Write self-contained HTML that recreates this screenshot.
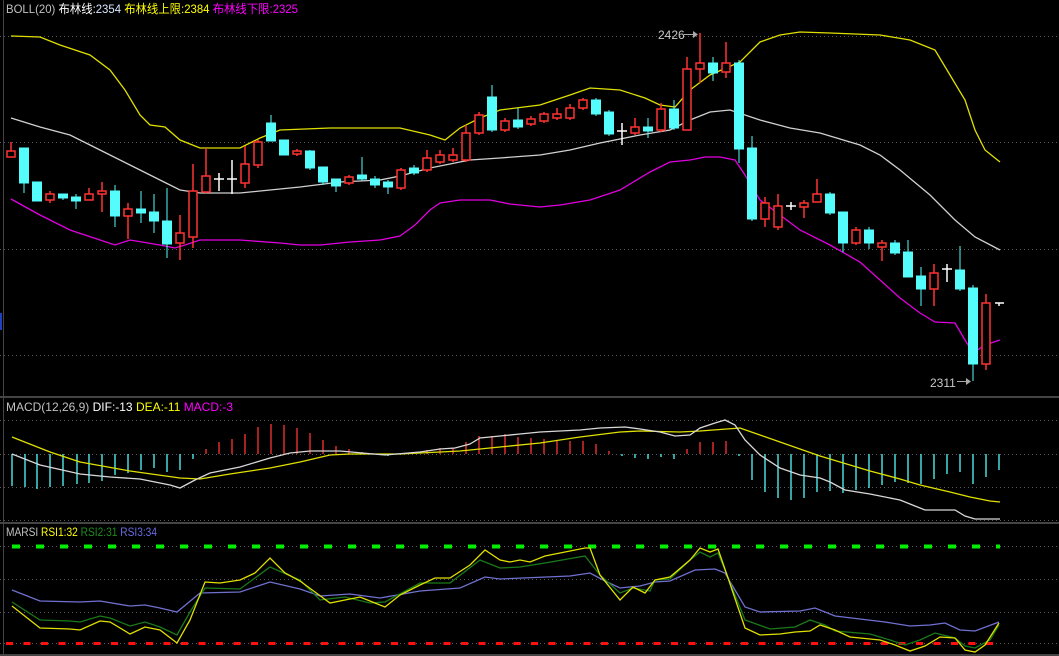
<!DOCTYPE html>
<html><head><meta charset="utf-8"><style>
html,body{margin:0;padding:0;background:#000;width:1059px;height:656px;overflow:hidden}
svg{display:block}
text{font-family:"Liberation Sans","Noto Sans CJK SC",sans-serif;font-size:12px}
</style></head><body>
<svg width="1059" height="656" viewBox="0 0 1059 656" xmlns="http://www.w3.org/2000/svg">
<rect width="1059" height="656" fill="#000"/>
<g stroke="#5a5a5a" stroke-width="1" stroke-dasharray="1,3">
<line x1="0" y1="36.5" x2="1059" y2="36.5"/><line x1="0" y1="142.5" x2="1059" y2="142.5"/><line x1="0" y1="249.5" x2="1059" y2="249.5"/><line x1="0" y1="355.5" x2="1059" y2="355.5"/>
<line x1="0" y1="420.5" x2="1059" y2="420.5"/><line x1="0" y1="454.5" x2="1059" y2="454.5"/><line x1="0" y1="487.5" x2="1059" y2="487.5"/><line x1="0" y1="520.5" x2="1059" y2="520.5"/>
<line x1="0" y1="546.5" x2="1059" y2="546.5"/><line x1="0" y1="579.5" x2="1059" y2="579.5"/><line x1="0" y1="612.5" x2="1059" y2="612.5"/><line x1="0" y1="643.5" x2="1059" y2="643.5"/>
</g>
<g stroke="#444" stroke-width="2"><line x1="0" y1="397" x2="1059" y2="397"/><line x1="0" y1="523" x2="1059" y2="523"/><line x1="0" y1="655" x2="1059" y2="655"/></g>
<line x1="3.5" y1="0" x2="3.5" y2="656" stroke="#444"/>
<rect x="0" y="313" width="2" height="17" fill="#2040c0"/>

<text x="6" y="13" textLength="292" lengthAdjust="spacingAndGlyphs"><tspan fill="#c0c0c0">BOLL(20) </tspan><tspan fill="#fff">布林线:</tspan><tspan fill="#d8e8ff">2354 </tspan><tspan fill="#ffff00">布林线上限:2384 </tspan><tspan fill="#ff00ff">布林线下限:2325</tspan></text>

<polyline fill="none" stroke="#e0e000" stroke-width="1.3" points="11,36 40,37 60,45 90,55 110,70 125,90 140,115 150,125 165,127 180,140 200,148 240,148 260,138 280,130 330,128 400,128 430,135 445,140 460,128 480,118 500,110 540,105 570,95 590,88 620,90 645,98 660,105 675,107 690,90 710,75 740,62 760,42 780,35 800,32 830,33 880,35 910,40 935,50 950,75 965,100 975,130 985,150 1000,162"/>
<polyline fill="none" stroke="#d0d0d0" stroke-width="1.3" points="11,118 40,127 70,135 100,150 130,165 160,180 180,190 200,193 240,193 270,190 300,187 340,182 380,180 400,176 430,168 470,160 500,158 540,155 570,150 600,143 640,135 670,130 690,120 710,112 730,110 760,120 790,128 820,133 860,145 880,155 900,170 930,195 955,220 975,237 1000,250"/>
<polyline fill="none" stroke="#e000e0" stroke-width="1.3" points="11,199 40,215 70,230 100,240 115,245 130,240 160,245 175,248 185,245 200,240 240,240 280,243 300,245 320,245 350,242 380,240 400,236 415,225 430,210 440,203 460,200 490,200 510,204 540,207 560,205 590,200 620,190 650,172 670,162 690,160 705,157 720,157 735,160 745,175 760,200 780,215 800,230 830,245 860,262 880,280 900,298 920,313 935,322 955,323 965,340 973,353 985,345 1000,340"/>

<g stroke-width="1">
<g stroke="#ff3333" fill="#000" stroke-width="1.5">
<line x1="11" y1="142" x2="11" y2="157"/><rect x="7" y="151" width="8" height="6"/>
<line x1="50" y1="191" x2="50" y2="203"/><rect x="46" y="194" width="8" height="6"/>
<line x1="89" y1="188" x2="89" y2="200"/><rect x="85" y="194" width="8" height="6"/>
<line x1="102" y1="182" x2="102" y2="212"/><rect x="98" y="191" width="8" height="3"/>
<line x1="128" y1="203" x2="128" y2="239"/><rect x="124" y="209" width="8" height="7"/>
<line x1="180" y1="215" x2="180" y2="260"/><rect x="176" y="233" width="8" height="10"/>
<line x1="193" y1="164" x2="193" y2="248"/><rect x="189" y="191" width="8" height="46"/>
<line x1="206" y1="148" x2="206" y2="193"/><rect x="202" y="176" width="8" height="16"/>
<line x1="245" y1="146" x2="245" y2="188"/><rect x="241" y="164" width="8" height="19"/>
<line x1="258" y1="140" x2="258" y2="168"/><rect x="254" y="142" width="8" height="23"/>
<line x1="297" y1="149" x2="297" y2="156"/><rect x="293" y="151" width="8" height="3"/>
<line x1="349" y1="175" x2="349" y2="185"/><rect x="345" y="177" width="8" height="6"/>
<line x1="401" y1="168" x2="401" y2="190"/><rect x="397" y="170" width="8" height="18"/>
<line x1="427" y1="150" x2="427" y2="172"/><rect x="423" y="158" width="8" height="12"/>
<line x1="440" y1="150" x2="440" y2="164"/><rect x="436" y="155" width="8" height="7"/>
<line x1="453" y1="148" x2="453" y2="162"/><rect x="449" y="155" width="8" height="5"/>
<line x1="466" y1="125" x2="466" y2="162"/><rect x="462" y="133" width="8" height="27"/>
<line x1="479" y1="112" x2="479" y2="135"/><rect x="475" y="115" width="8" height="18"/>
<line x1="505" y1="118" x2="505" y2="132"/><rect x="501" y="121" width="8" height="9"/>
<line x1="531" y1="116" x2="531" y2="126"/><rect x="527" y="119" width="8" height="5"/>
<line x1="544" y1="112" x2="544" y2="123"/><rect x="540" y="114" width="8" height="7"/>
<line x1="557" y1="108" x2="557" y2="120"/><rect x="553" y="114" width="8" height="4"/>
<line x1="570" y1="104" x2="570" y2="120"/><rect x="566" y="108" width="8" height="10"/>
<line x1="583" y1="98" x2="583" y2="110"/><rect x="579" y="100" width="8" height="8"/>
<line x1="635" y1="118" x2="635" y2="135"/><rect x="631" y="127" width="8" height="6"/>
<line x1="661" y1="103" x2="661" y2="132"/><rect x="657" y="109" width="8" height="21"/>
<line x1="687" y1="57" x2="687" y2="130"/><rect x="683" y="69" width="8" height="61"/>
<line x1="700" y1="33" x2="700" y2="83"/><rect x="696" y="63" width="8" height="6"/>
<line x1="726" y1="42" x2="726" y2="78"/><rect x="722" y="63" width="8" height="9"/>
<line x1="765" y1="197" x2="765" y2="227"/><rect x="761" y="203" width="8" height="16"/>
<line x1="778" y1="194" x2="778" y2="230"/><rect x="774" y="206" width="8" height="21"/>
<line x1="804" y1="200" x2="804" y2="218"/><rect x="800" y="203" width="8" height="4"/>
<line x1="817" y1="179" x2="817" y2="202"/><rect x="813" y="194" width="8" height="8"/>
<line x1="856" y1="227" x2="856" y2="245"/><rect x="852" y="230" width="8" height="13"/>
<line x1="882" y1="240" x2="882" y2="261"/><rect x="878" y="243" width="8" height="4"/>
<line x1="934" y1="264" x2="934" y2="306"/><rect x="930" y="273" width="8" height="16"/>
<line x1="986" y1="294" x2="986" y2="370"/><rect x="982" y="303" width="8" height="61"/>
</g>
<g stroke="#54fcfc" fill="#54fcfc">
<line x1="24" y1="148" x2="24" y2="193"/><rect x="19.5" y="148" width="9" height="35"/>
<line x1="37" y1="182" x2="37" y2="201"/><rect x="32.5" y="182" width="9" height="19"/>
<line x1="63" y1="194" x2="63" y2="200"/><rect x="58.5" y="194" width="9" height="4"/>
<line x1="76" y1="194" x2="76" y2="209"/><rect x="71.5" y="197" width="9" height="4"/>
<line x1="115" y1="185" x2="115" y2="227"/><rect x="110.5" y="191" width="9" height="25"/>
<line x1="141" y1="191" x2="141" y2="223"/><rect x="136.5" y="209" width="9" height="4"/>
<line x1="154" y1="194" x2="154" y2="233"/><rect x="149.5" y="212" width="9" height="9"/>
<line x1="167" y1="188" x2="167" y2="258"/><rect x="162.5" y="221" width="9" height="23"/>
<line x1="271" y1="115" x2="271" y2="141"/><rect x="266.5" y="123" width="9" height="18"/>
<line x1="284" y1="140" x2="284" y2="155"/><rect x="279.5" y="140" width="9" height="15"/>
<line x1="310" y1="150" x2="310" y2="170"/><rect x="305.5" y="151" width="9" height="17"/>
<line x1="323" y1="167" x2="323" y2="185"/><rect x="318.5" y="167" width="9" height="15"/>
<line x1="336" y1="179" x2="336" y2="192"/><rect x="331.5" y="179" width="9" height="7"/>
<line x1="362" y1="157" x2="362" y2="181"/><rect x="357.5" y="175" width="9" height="4"/>
<line x1="375" y1="176" x2="375" y2="188"/><rect x="370.5" y="179" width="9" height="6"/>
<line x1="388" y1="180" x2="388" y2="194"/><rect x="383.5" y="182" width="9" height="5"/>
<line x1="414" y1="165" x2="414" y2="175"/><rect x="409.5" y="168" width="9" height="5"/>
<line x1="492" y1="85" x2="492" y2="132"/><rect x="487.5" y="97" width="9" height="33"/>
<line x1="518" y1="108" x2="518" y2="129"/><rect x="513.5" y="120" width="9" height="7"/>
<line x1="596" y1="98" x2="596" y2="116"/><rect x="591.5" y="100" width="9" height="14"/>
<line x1="609" y1="110" x2="609" y2="136"/><rect x="604.5" y="112" width="9" height="22"/>
<line x1="648" y1="118" x2="648" y2="138"/><rect x="643.5" y="127" width="9" height="4"/>
<line x1="674" y1="100" x2="674" y2="130"/><rect x="669.5" y="109" width="9" height="19"/>
<line x1="713" y1="57" x2="713" y2="81"/><rect x="708.5" y="63" width="9" height="10"/>
<line x1="739" y1="60" x2="739" y2="163"/><rect x="734.5" y="63" width="9" height="86"/>
<line x1="752" y1="136" x2="752" y2="221"/><rect x="747.5" y="148" width="9" height="71"/>
<line x1="830" y1="192" x2="830" y2="215"/><rect x="825.5" y="194" width="9" height="19"/>
<line x1="843" y1="212" x2="843" y2="252"/><rect x="838.5" y="212" width="9" height="31"/>
<line x1="869" y1="227" x2="869" y2="249"/><rect x="864.5" y="230" width="9" height="13"/>
<line x1="895" y1="240" x2="895" y2="255"/><rect x="890.5" y="243" width="9" height="10"/>
<line x1="908" y1="240" x2="908" y2="277"/><rect x="903.5" y="252" width="9" height="25"/>
<line x1="921" y1="267" x2="921" y2="306"/><rect x="916.5" y="276" width="9" height="13"/>
<line x1="960" y1="246" x2="960" y2="291"/><rect x="955.5" y="270" width="9" height="19"/>
<line x1="973" y1="285" x2="973" y2="381"/><rect x="968.5" y="288" width="9" height="76"/>
</g>
<g stroke="#fff" stroke-width="1.5">
<line x1="219" y1="173" x2="219" y2="191"/><line x1="214" y1="179" x2="224" y2="179"/>
<line x1="232" y1="160" x2="232" y2="194"/><line x1="227" y1="179" x2="237" y2="179"/>
<line x1="622" y1="123" x2="622" y2="145"/><line x1="617" y1="131" x2="627" y2="131"/>
<line x1="791" y1="202" x2="791" y2="210"/><line x1="786" y1="206" x2="796" y2="206"/>
<line x1="947" y1="264" x2="947" y2="282"/><line x1="942" y1="269" x2="952" y2="269"/>
<line x1="999" y1="303" x2="999" y2="306"/><line x1="995" y1="303" x2="1004" y2="303"/>
</g>
</g>
<text x="658" y="39" fill="#c8c8c8">2426</text>
<line x1="684" y1="34.5" x2="696" y2="34.5" stroke="#aaa"/><path d="M693,31 L698,34.5 L693,38z" fill="#aaa"/>
<text x="930" y="387" fill="#c8c8c8">2311</text>
<line x1="957" y1="381.5" x2="969" y2="381.5" stroke="#aaa"/><path d="M966,378 L971,381.5 L966,385z" fill="#aaa"/>

<text x="6" y="411" textLength="227" lengthAdjust="spacingAndGlyphs"><tspan fill="#c0c0c0">MACD(12,26,9) </tspan><tspan fill="#fff">DIF:-13 </tspan><tspan fill="#ffff00">DEA:-11 </tspan><tspan fill="#ff00ff">MACD:-3</tspan></text>
<g stroke="#54fcfc" stroke-width="1.3">
<line x1="12" y1="454" x2="12" y2="486"/><line x1="25" y1="454" x2="25" y2="487"/><line x1="37" y1="454" x2="37" y2="489"/><line x1="50" y1="454" x2="50" y2="487"/><line x1="63" y1="454" x2="63" y2="486"/><line x1="77" y1="454" x2="77" y2="484"/><line x1="89" y1="454" x2="89" y2="483"/><line x1="102" y1="454" x2="102" y2="481"/><line x1="115" y1="454" x2="115" y2="475"/><line x1="128" y1="454" x2="128" y2="473"/><line x1="141" y1="454" x2="141" y2="470"/><line x1="154" y1="454" x2="154" y2="468"/><line x1="167" y1="454" x2="167" y2="472"/><line x1="180" y1="454" x2="180" y2="470"/><line x1="193" y1="454" x2="193" y2="459"/>
<line x1="388" y1="454" x2="388" y2="456"/><line x1="622" y1="454" x2="622" y2="456"/><line x1="635" y1="454" x2="635" y2="458"/><line x1="648" y1="454" x2="648" y2="459"/><line x1="661" y1="454" x2="661" y2="457"/><line x1="674" y1="454" x2="674" y2="459"/>
<line x1="739" y1="454" x2="739" y2="456"/><line x1="752" y1="454" x2="752" y2="480"/><line x1="765" y1="454" x2="765" y2="492"/><line x1="778" y1="454" x2="778" y2="498"/><line x1="791" y1="454" x2="791" y2="500"/><line x1="804" y1="454" x2="804" y2="498"/><line x1="817" y1="454" x2="817" y2="492"/><line x1="830" y1="454" x2="830" y2="491"/><line x1="843" y1="454" x2="843" y2="493"/><line x1="856" y1="454" x2="856" y2="490"/><line x1="869" y1="454" x2="869" y2="488"/><line x1="882" y1="454" x2="882" y2="485"/><line x1="895" y1="454" x2="895" y2="482"/><line x1="908" y1="454" x2="908" y2="483"/><line x1="921" y1="454" x2="921" y2="484"/><line x1="934" y1="454" x2="934" y2="479"/><line x1="947" y1="454" x2="947" y2="474"/><line x1="960" y1="454" x2="960" y2="472"/><line x1="973" y1="454" x2="973" y2="484"/><line x1="986" y1="454" x2="986" y2="477"/><line x1="999" y1="454" x2="999" y2="470"/>
</g>
<g stroke="#ff3333" stroke-width="1.3">
<line x1="206" y1="454" x2="206" y2="449"/><line x1="219" y1="454" x2="219" y2="442"/><line x1="232" y1="454" x2="232" y2="439"/><line x1="245" y1="454" x2="245" y2="434"/><line x1="258" y1="454" x2="258" y2="427"/><line x1="271" y1="454" x2="271" y2="424"/><line x1="284" y1="454" x2="284" y2="425"/><line x1="297" y1="454" x2="297" y2="428"/><line x1="310" y1="454" x2="310" y2="433"/><line x1="323" y1="454" x2="323" y2="440"/><line x1="336" y1="454" x2="336" y2="446"/><line x1="349" y1="454" x2="349" y2="449"/><line x1="362" y1="454" x2="362" y2="452"/>
<line x1="427" y1="454" x2="427" y2="450"/><line x1="440" y1="454" x2="440" y2="448"/><line x1="453" y1="454" x2="453" y2="448"/><line x1="466" y1="454" x2="466" y2="442"/><line x1="479" y1="454" x2="479" y2="436"/><line x1="492" y1="454" x2="492" y2="436"/><line x1="505" y1="454" x2="505" y2="434"/><line x1="518" y1="454" x2="518" y2="437"/><line x1="531" y1="454" x2="531" y2="438"/><line x1="544" y1="454" x2="544" y2="439"/><line x1="557" y1="454" x2="557" y2="441"/><line x1="570" y1="454" x2="570" y2="441"/><line x1="583" y1="454" x2="583" y2="441"/><line x1="596" y1="454" x2="596" y2="444"/><line x1="609" y1="454" x2="609" y2="451"/>
<line x1="687" y1="454" x2="687" y2="449"/><line x1="700" y1="454" x2="700" y2="442"/><line x1="713" y1="454" x2="713" y2="442"/><line x1="726" y1="454" x2="726" y2="441"/>
</g>
<polyline fill="none" stroke="#e0e000" stroke-width="1.3" points="12,437 50,452 80,462 130,471 180,478 200,479 230,474 270,468 300,462 330,455 350,454 400,454 460,451 500,447 540,443 580,437 620,432 640,431 680,432 700,431 740,428 760,435 780,442 800,449 820,456 850,465 870,471 900,479 920,485 950,492 970,497 990,501 1000,502"/>
<polyline fill="none" stroke="#d8d8d8" stroke-width="1.3" points="12,454 40,465 80,474 110,477 140,479 170,485 180,488 195,480 210,473 240,467 270,458 290,453 310,451 340,451 385,455 420,452 440,449 455,448 470,444 480,438 500,436 520,434 540,432 560,431 580,430 600,428 625,427 640,429 660,432 675,436 690,435 700,428 715,423 725,420 735,425 745,440 760,455 780,468 800,475 820,478 830,482 845,490 870,494 900,500 915,506 925,510 955,510 965,516 975,519 1000,519"/>

<text x="6" y="536" textLength="151" lengthAdjust="spacingAndGlyphs"><tspan fill="#c0c0c0">MARSI </tspan><tspan fill="#ffff00">RSI1:32 </tspan><tspan fill="#1e8c1e">RSI2:31 </tspan><tspan fill="#6a6ae0">RSI3:34</tspan></text>
<line x1="12" y1="546.5" x2="1000" y2="546.5" stroke="#00ee00" stroke-width="4" stroke-dasharray="8,16"/>
<line x1="6" y1="643.5" x2="1000" y2="643.5" stroke="#ff1010" stroke-width="3" stroke-dasharray="7,10.5"/>
<polyline fill="none" stroke="#7070d0" stroke-width="1.3" points="12,590 40,601 80,602 100,601 130,606 145,605 160,608 177,612 200,593 240,592 270,582 300,589 320,596 350,594 380,598 420,591 460,588 485,577 500,579 570,576 590,573 605,581 620,588 640,586 655,582 670,581 695,570 715,569 725,573 745,607 760,612 800,611 815,608 835,616 860,619 885,622 910,626 930,625 945,623 960,630 975,631 999,622"/>
<polyline fill="none" stroke="#1a7a1a" stroke-width="1.3" points="12,602 40,620 70,621 80,622 100,616 110,618 130,626 145,622 160,627 177,635 190,612 205,588 240,589 270,567 300,580 320,600 345,597 370,603 385,602 420,583 450,583 480,560 500,568 520,567 545,563 585,556 600,575 620,593 633,588 650,591 655,580 670,579 690,560 700,552 710,557 718,553 727,575 745,620 770,629 795,627 810,620 825,625 835,631 870,634 890,640 905,645 920,640 935,633 955,638 965,646 975,648 990,640 999,625"/>
<polyline fill="none" stroke="#e0e000" stroke-width="1.3" points="12,606 40,628 70,629 80,630 100,621 110,622 130,634 145,627 160,630 177,643 190,620 205,582 220,583 240,580 255,573 270,558 285,573 300,581 315,592 330,603 345,600 360,597 375,603 385,607 400,595 420,585 435,578 450,578 470,565 485,550 500,560 510,562 520,560 530,562 545,556 565,552 585,548 590,548 600,575 620,600 633,587 645,593 655,580 670,577 690,560 700,548 710,552 718,549 727,575 745,628 760,635 780,634 795,632 810,631 820,625 835,630 850,637 880,640 895,645 910,651 925,646 940,637 955,638 965,650 975,652 985,645 999,623"/>
</svg>
</body></html>
